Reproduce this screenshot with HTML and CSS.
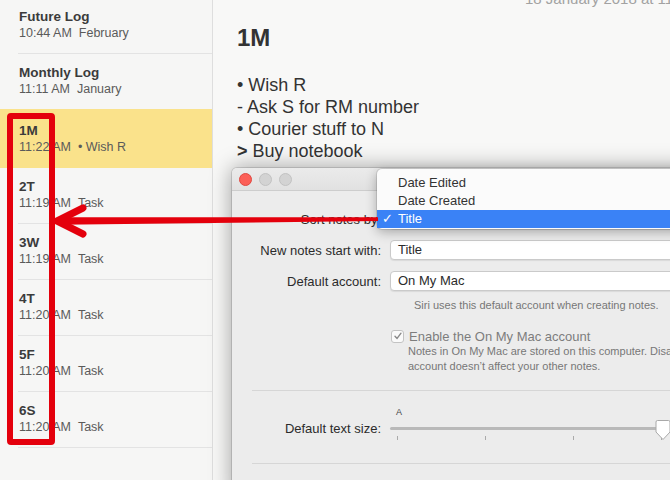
FILE: index.html
```html
<!DOCTYPE html>
<html>
<head>
<meta charset="utf-8">
<link rel="stylesheet" href="styles.css">
</head>
<body>
<div class="app">
  <aside class="sidebar">
    <div class="list">
      <div class="item"><div class="t">Future Log</div><div class="s"><span class="time">10:44 AM</span><span class="ex">February</span></div></div>
      <div class="item"><div class="t">Monthly Log</div><div class="s"><span class="time">11:11 AM</span><span class="ex">January</span></div></div>
      <div class="item selected"><div class="t">1M</div><div class="s"><span class="time">11:22 AM</span><span class="ex">• Wish R</span></div></div>
      <div class="item"><div class="t">2T</div><div class="s"><span class="time">11:19 AM</span><span class="ex">Task</span></div></div>
      <div class="item"><div class="t">3W</div><div class="s"><span class="time">11:19 AM</span><span class="ex">Task</span></div></div>
      <div class="item"><div class="t">4T</div><div class="s"><span class="time">11:20 AM</span><span class="ex">Task</span></div></div>
      <div class="item"><div class="t">5F</div><div class="s"><span class="time">11:20 AM</span><span class="ex">Task</span></div></div>
      <div class="item"><div class="t">6S</div><div class="s"><span class="time">11:20 AM</span><span class="ex">Task</span></div></div>
    </div>
  </aside>
  <main class="note">
    <div class="date">18 January 2018 at 11:22</div>
    <h1 class="heading">1M</h1>
    <div class="lines">
      <div>• Wish R</div>
      <div>- Ask S for RM number</div>
      <div>• Courier stuff to N</div>
      <div><b>&gt;</b> Buy notebook</div>
    </div>
  </main>
</div>

<section class="prefs">
  <div class="titlebar">
    <span class="light red"></span><span class="light"></span><span class="light"></span>
  </div>
  <div class="content">
    <div class="row"><div class="label">Sort notes by:</div><div class="popup">Title</div></div>
    <div class="row"><div class="label">New notes start with:</div><div class="popup">Title</div></div>
    <div class="row"><div class="label">Default account:</div><div class="popup">On My Mac</div></div>
    <div class="hint siri">Siri uses this default account when creating notes.</div>
    <div class="check-row">
      <span class="checkbox"><svg width="10" height="10" viewBox="0 0 10 10"><path d="M2 5.2 L4.1 7.4 L8 2.2" fill="none" stroke="#8a8a8a" stroke-width="1.4" stroke-linecap="round" stroke-linejoin="round"/></svg></span>
      <span class="check-label">Enable the On My Mac account</span>
    </div>
    <div class="hint notes">Notes in On My Mac are stored on this computer. Disabling this<br>account doesn’t affect your other notes.</div>
    <div class="sep first"></div>
    <div class="slider-row">
      <div class="label slabel">Default text size:</div>
      <div class="slider">
        <div class="small-a">A</div>
        <div class="track"></div>
        <div class="ticks"><span></span><span></span><span></span><span></span></div>
        <svg class="thumb" width="16" height="22" viewBox="0 0 16 22"><path d="M2.5 1.5 H13.5 Q15 1.5 15 3 V13 L8 20.5 L1 13 V3 Q1 1.5 2.5 1.5 Z" fill="#fff" stroke="#a9a9a9" stroke-width="1"/></svg>
      </div>
    </div>
    <div class="sep second"></div>
  </div>
</section>

<div class="menu">
  <div class="mi">Date Edited</div>
  <div class="mi">Date Created</div>
  <div class="mi active"><span class="tick">✓</span>Title</div>
</div>

<div class="redbox"></div>
<svg class="arrow" width="340" height="40" viewBox="0 0 340 40">
  <polygon points="10,17.3 328,17.2 328,21 10,24.7" fill="#e4000c"/>
  <path d="M33 8 L7 21 L33 34" stroke="#e4000c" stroke-width="7" fill="none" stroke-linejoin="miter" stroke-linecap="round"/>
</svg>
</body>
</html>
```

FILE: styles.css
```css
html, body {
  margin: 0;
  padding: 0;
}
body {
  width: 670px;
  height: 480px;
  overflow: hidden;
  position: relative;
  font-family: "Liberation Sans", Arial, sans-serif;
  background: #f8f8f7;
}
.app {
  display: flex;
  height: 480px;
}
.sidebar {
  width: 212px;
  flex: none;
  background: #f6f6f5;
  border-right: 1px solid #dedede;
  overflow: hidden;
}
.list {
  margin-top: -2px;
}
.item {
  height: 56px;
  box-sizing: border-box;
  margin-left: 18px;
  padding: 11px 0 0 1px;
  border-bottom: 1px solid #e3e3e3;
}
.item.selected {
  margin-left: 0;
  margin-top: -1px;
  height: 59px;
  padding: 14px 0 0 19px;
  background: #fae28b;
  border-bottom: none;
}
.t {
  font-size: 13.5px;
  line-height: 16px;
  font-weight: bold;
  color: #3b3b3b;
}
.s {
  font-size: 12.5px;
  line-height: 16px;
  color: #5a5a5a;
  white-space: nowrap;
}
.ex {
  margin-left: 7px;
}
.note {
  flex: 1;
  padding-left: 24px;
  overflow: hidden;
  white-space: nowrap;
  color: #333;
}
.date {
  margin-top: -10px;
  padding-left: 288px;
  font-size: 15px;
  line-height: 18px;
  color: #a2a2a2;
}
.heading {
  margin: 16px 0 0 0;
  font-size: 24px;
  line-height: 28px;
  font-weight: bold;
  color: #333;
}
.lines {
  margin-top: 22px;
  font-size: 18px;
  line-height: 22px;
  color: #333;
}

/* preferences window */
.prefs {
  position: absolute;
  left: 232px;
  top: 168px;
  width: 470px;
  height: 330px;
  background: #ececec;
  border-radius: 5px 0 0 0;
  box-shadow: 0 0 22px rgba(0,0,0,0.38), 0 0 0 1px rgba(0,0,0,0.12);
  overflow: hidden;
}
.titlebar {
  height: 22px;
  border-bottom: 1px solid #cdcdcd;
  background: linear-gradient(#ebebeb, #e1e1e1);
  display: flex;
  align-items: center;
  gap: 7px;
  padding-left: 7px;
}
.light {
  width: 11px;
  height: 11px;
  border-radius: 50%;
  background: #d3d3d3;
  border: 1px solid #c2c2c2;
}
.light.red {
  background: #fc5f57;
  border-color: #df4840;
}
.content {
  padding-top: 18px;
  display: flex;
  flex-direction: column;
  font-size: 13px;
  color: #2b2b2b;
}
.row {
  display: flex;
  align-items: center;
  height: 20px;
  margin-bottom: 11px;
}
.label {
  width: 149px;
  margin-right: 9px;
  text-align: right;
  flex: none;
  white-space: nowrap;
}
.popup {
  width: 300px;
  height: 20px;
  box-sizing: border-box;
  background: #fff;
  border: 1px solid #cacaca;
  border-radius: 4px;
  box-shadow: 0 1px 1px rgba(0,0,0,0.08);
  padding-left: 7px;
  line-height: 18px;
}
.hint {
  font-size: 11px;
  color: #777;
  white-space: nowrap;
}
.siri {
  margin-top: -4px;
  margin-left: 182px;
  line-height: 14px;
}
.check-row {
  display: flex;
  align-items: center;
  margin-top: 17px;
  margin-left: 159px;
  height: 14px;
}
.checkbox {
  width: 11px;
  height: 11px;
  border: 1px solid #c3c3c3;
  border-radius: 3px;
  background: #fafafa;
  display: flex;
  align-items: center;
  justify-content: center;
}
.check-label {
  margin-left: 5px;
  color: #7d7d7d;
}
.notes {
  margin-left: 176px;
  line-height: 15px;
  margin-top: 1px;
}
.sep {
  margin-left: 20px;
  height: 1px;
  background: #d6d6d6;
}
.sep.first {
  margin-top: 16px;
}
.sep.second {
  margin-top: 21px;
}
.slider-row {
  display: flex;
  margin-top: 15px;
}
.slabel {
  padding-top: 15px;
  line-height: 16px;
}
.slider {
  position: relative;
  width: 280px;
  height: 36px;
}
.small-a {
  font-size: 9px;
  line-height: 12px;
  padding-left: 6px;
  color: #444;
}
.track {
  margin-top: 9px;
  width: 272px;
  height: 3px;
  border-radius: 2px;
  background: #b9b9b9;
}
.ticks {
  margin-top: 6px;
  display: flex;
  gap: 87px;
  padding-left: 7px;
}
.ticks span {
  width: 1px;
  height: 4px;
  background: #aaa;
}
.thumb {
  position: absolute;
  left: 265px;
  top: 13px;
}

/* popup menu */
.menu {
  position: absolute;
  left: 377px;
  top: 169px;
  width: 320px;
  padding: 5px 0 1px 0;
  background: #fbfbfb;
  border-radius: 5px;
  box-shadow: 0 3px 12px rgba(0,0,0,0.3), 0 0 0 1px rgba(0,0,0,0.1);
  font-size: 13px;
  color: #333;
}
.mi {
  height: 18px;
  line-height: 18px;
  padding-left: 21px;
  position: relative;
}
.mi.active {
  background: #3a82f6;
  color: #fff;
}
.tick {
  position: absolute;
  left: 5px;
  top: 0;
}

/* annotations */
.redbox {
  position: absolute;
  left: 7px;
  top: 113px;
  width: 36px;
  height: 320px;
  border: 6px solid #e4000c;
  border-radius: 4px;
}
.arrow {
  position: absolute;
  left: 50px;
  top: 200px;
}
```
